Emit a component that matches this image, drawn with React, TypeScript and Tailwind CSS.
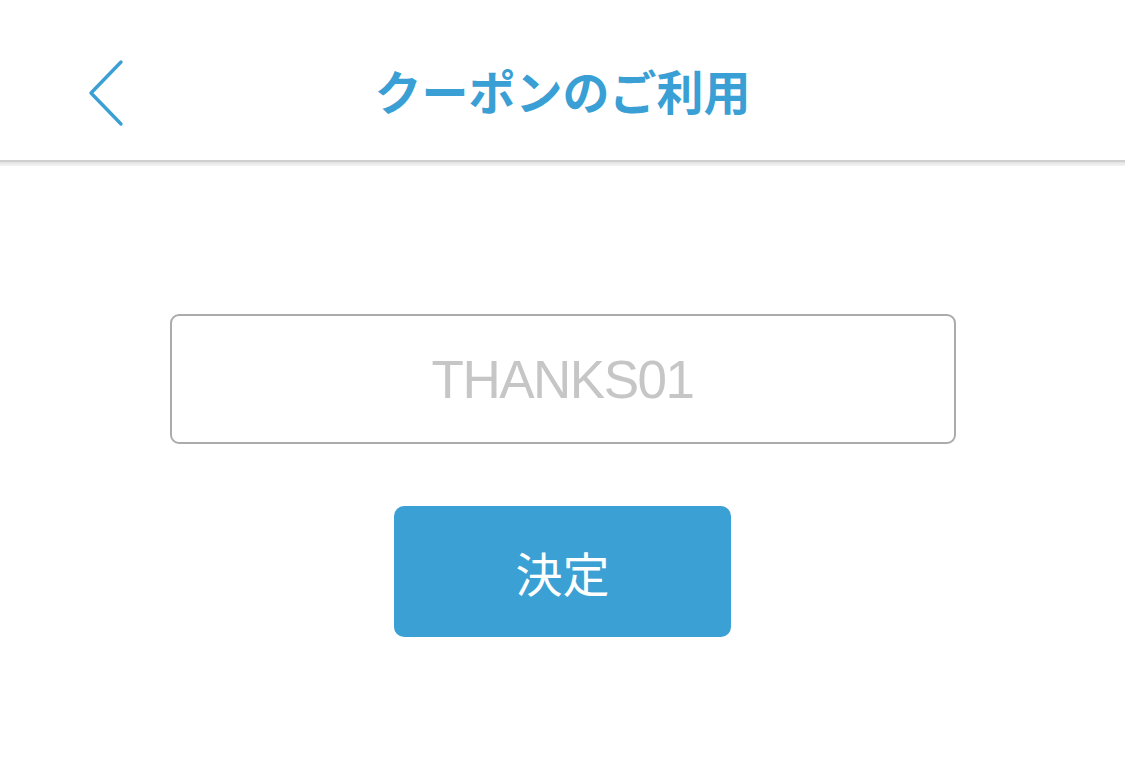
import { useState } from 'react';

export default function App() {
  const [code, setCode] = useState('');

  return (
    <div className="min-h-screen bg-white font-['Noto_Sans_CJK_JP',sans-serif]">
      {/* Nav bar */}
      <header className="grid h-[160px] grid-cols-[1fr_auto_1fr] items-center pt-[27px]">
        <button className="ml-[84px] flex h-[72px] w-[44px] items-center justify-center justify-self-start">
          <svg width="40" height="70" viewBox="0 0 40 70" fill="none">
            <path
              d="M35 3 L5 34 L35 65"
              stroke="#3a9fd4"
              strokeWidth="3.4"
              strokeLinecap="round"
              strokeLinejoin="round"
            />
          </svg>
        </button>
        <h1 className="mb-[8px] text-[47px] font-bold leading-none text-[#3a9fd4]">
          クーポンのご利用
        </h1>
        <div />
      </header>
      <div className="h-[2px] bg-[#cfcfcf]" />
      <div className="h-[4px] bg-gradient-to-b from-[#e2e2e2] to-[#f4f4f4]" />

      {/* Form */}
      <main className="flex flex-col items-center pt-[148px]">
        <input
          value={code}
          onChange={e => setCode(e.target.value)}
          placeholder="THANKS01"
          className="h-[130px] w-[786px] rounded-[9px] border-2 border-[#ababab] bg-white text-center font-['Liberation_Sans',sans-serif] text-[53px] tracking-[-1.5px] text-[#555] outline-none placeholder:text-[#c6c6c6]"
        />
        <button className="mt-[62px] flex h-[131px] w-[337px] items-center justify-center rounded-[10px] bg-[#3ba0d4] text-[47px] font-normal leading-none text-white">
          決定
        </button>
      </main>
    </div>
  );
}
